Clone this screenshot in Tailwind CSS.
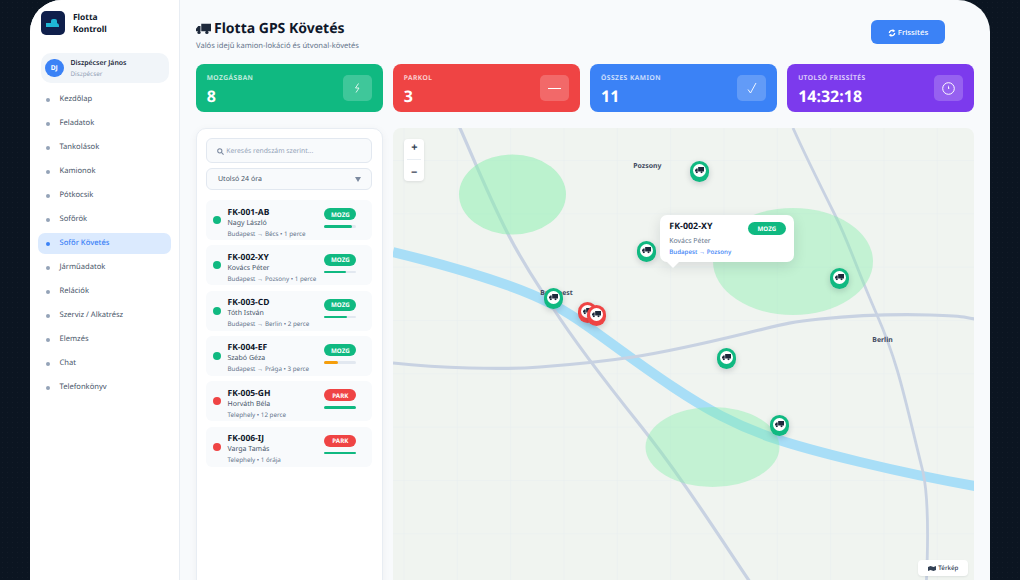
<!DOCTYPE html>
<html lang="hu">
<head>
    <meta charset="UTF-8">
    <meta name="viewport" content="width=device-width, initial-scale=1.0">
    <title>Flotta GPS Követés</title>
    <script src="https://cdn.jsdelivr.net/npm/@tailwindcss/browser@4"></script>
</head>
<body class="h-[580px] w-[1020px] overflow-hidden bg-[#0b1521] bg-[radial-gradient(rgba(255,255,255,0.03)_0.5px,transparent_0.6px)] bg-[size:5px_5px] font-['Noto_Sans',sans-serif] [text-rendering:geometricPrecision]">
    <svg class="hidden">
        <symbol id="truck" viewBox="0 0 20 14">
            <path fill="currentColor" d="M7 0h13v10H7zM6 3H3L0 6.5V10h6z"/>
            <circle fill="currentColor" cx="4" cy="11.5" r="2.2"/>
            <circle fill="currentColor" cx="14.5" cy="11.5" r="2.2"/>
        </symbol>
    </svg>

    <div class="mx-[30px] flex h-[580px] w-[960px] overflow-hidden rounded-t-[32px] bg-[#f8fafc]">
        <!-- sidebar -->
        <aside class="w-[150px] shrink-0 border-r border-[#e8edf3] bg-white px-[8px] pt-[11px]">
            <div class="flex items-center gap-[8px] pl-[3px]">
                <div class="relative h-[24px] w-[24px] overflow-hidden rounded-[5px] bg-[#0f1f4b]">
                    <div class="absolute left-[5px] top-[12px] h-[4px] w-[13px] rounded-tr-[3px] bg-[#1fb6d5]"></div>
                    <div class="absolute left-[10px] top-[8px] h-[5px] w-[6px] rounded-t-[2px] bg-[#1fb6d5]"></div>
                </div>
                <div class="pt-[1px] text-[8.4px] font-bold leading-[11.5px] text-[#0f172a]">Flotta<br>Kontroll</div>
            </div>
            <div class="mt-[18px] ml-[3px] flex h-[30px] w-[128px] items-center gap-[7px] rounded-[10px] bg-[#f1f5f9] pl-[4px]">
                <div class="flex h-[18.5px] w-[18.5px] items-center justify-center rounded-full bg-[#3b82f6] text-[6.7px] font-bold text-white">DJ</div>
                <div>
                    <div class="text-[6.9px] font-semibold leading-[10px] text-[#1e293b]">Diszpécser János</div>
                    <div class="text-[6.3px] leading-[9px] text-[#94a3b8]">Diszpécser</div>
                </div>
            </div>
            <nav class="mt-[4px] flex flex-col text-[7.6px] text-[#475569]">
                <a class="flex h-[24px] items-center gap-[9.5px] pl-[8px] pt-[2px]"><span class="h-[4px] w-[4px] rounded-full bg-[#94a3b8]"></span>Kezdőlap</a>
                <a class="flex h-[24px] items-center gap-[9.5px] pl-[8px] pt-[2px]"><span class="h-[4px] w-[4px] rounded-full bg-[#94a3b8]"></span>Feladatok</a>
                <a class="flex h-[24px] items-center gap-[9.5px] pl-[8px] pt-[2px]"><span class="h-[4px] w-[4px] rounded-full bg-[#94a3b8]"></span>Tankolások</a>
                <a class="flex h-[24px] items-center gap-[9.5px] pl-[8px] pt-[2px]"><span class="h-[4px] w-[4px] rounded-full bg-[#94a3b8]"></span>Kamionok</a>
                <a class="flex h-[24px] items-center gap-[9.5px] pl-[8px] pt-[2px]"><span class="h-[4px] w-[4px] rounded-full bg-[#94a3b8]"></span>Pótkocsik</a>
                <a class="flex h-[24px] items-center gap-[9.5px] pl-[8px] pt-[2px]"><span class="h-[4px] w-[4px] rounded-full bg-[#94a3b8]"></span>Sofőrök</a>
                <a class="my-[1.5px] flex h-[21px] items-center gap-[9.5px] rounded-[7px] bg-[#dbeafe] pl-[8px] pt-[2px] font-medium text-[#3b82f6]"><span class="h-[4px] w-[4px] rounded-full bg-[#3b82f6]"></span>Sofőr Követés</a>
                <a class="flex h-[24px] items-center gap-[9.5px] pl-[8px] pt-[2px]"><span class="h-[4px] w-[4px] rounded-full bg-[#94a3b8]"></span>Járműadatok</a>
                <a class="flex h-[24px] items-center gap-[9.5px] pl-[8px] pt-[2px]"><span class="h-[4px] w-[4px] rounded-full bg-[#94a3b8]"></span>Relációk</a>
                <a class="flex h-[24px] items-center gap-[9.5px] pl-[8px] pt-[2px]"><span class="h-[4px] w-[4px] rounded-full bg-[#94a3b8]"></span>Szerviz / Alkatrész</a>
                <a class="flex h-[24px] items-center gap-[9.5px] pl-[8px] pt-[2px]"><span class="h-[4px] w-[4px] rounded-full bg-[#94a3b8]"></span>Elemzés</a>
                <a class="flex h-[24px] items-center gap-[9.5px] pl-[8px] pt-[2px]"><span class="h-[4px] w-[4px] rounded-full bg-[#94a3b8]"></span>Chat</a>
                <a class="flex h-[24px] items-center gap-[9.5px] pl-[8px] pt-[2px]"><span class="h-[4px] w-[4px] rounded-full bg-[#94a3b8]"></span>Telefonkönyv</a>
            </nav>
        </aside>

        <!-- main -->
        <main class="w-[810px] pl-[16px] pr-[16px]">
            <header class="flex h-[64px] items-start justify-between">
                <div class="pt-[19px]">
                    <h1 class="flex items-center gap-[3px] text-[14px] font-bold leading-[20px] text-[#0f172a]">
                        <svg class="h-[12px] w-[15px] text-[#1e293b]"><use href="#truck"/></svg>
                        Flotta GPS Követés
                    </h1>
                    <p class="mt-[2px] text-[7.6px] leading-[11px] text-[#64748b]">Valós idejű kamion-lokáció és útvonal-követés</p>
                </div>
                <button class="mr-[29px] mt-[20px] flex h-[24px] w-[74px] items-center justify-center gap-[2px] rounded-[6px] bg-[#3b82f6] pt-[1px] text-[7.8px] font-medium text-white">
                    <svg class="h-[8px] w-[8px]" viewBox="0 0 12 12" fill="none" stroke="currentColor" stroke-width="2"><path d="M2 6a4 4 0 0 1 6.5-3M10 6a4 4 0 0 1-6.5 3"/><path fill="currentColor" stroke="none" d="M7 0l4 3-4 2zM5 12L1 9l4-2z"/></svg>
                    Frissítés
                </button>
            </header>

            <section class="grid h-[48px] grid-cols-4 gap-[10.67px]">
                <div class="flex items-center justify-between rounded-[8px] bg-[#10b981] px-[10.67px] text-white">
                    <div class="pt-[2px]">
                        <div class="text-[6.67px] font-semibold uppercase leading-[9px] tracking-[0.5px] text-white/80">Mozgásban</div>
                        <div class="mt-[4px] text-[16px] font-bold leading-[20px]">8</div>
                    </div>
                    <div class="flex h-[26px] w-[29px] items-center justify-center rounded-[5px] bg-white/20">
                        <svg class="h-[10px] w-[7px]" viewBox="0 0 7 10" fill="none" stroke="currentColor" stroke-width="0.8"><path d="M4.5 0.5L1.5 5h3.5L2 9.5"/></svg>
                    </div>
                </div>
                <div class="flex items-center justify-between rounded-[8px] bg-[#ef4444] px-[10.67px] text-white">
                    <div class="pt-[2px]">
                        <div class="text-[6.67px] font-semibold uppercase leading-[9px] tracking-[0.5px] text-white/80">Parkol</div>
                        <div class="mt-[4px] text-[16px] font-bold leading-[20px]">3</div>
                    </div>
                    <div class="flex h-[26px] w-[29px] items-center justify-center rounded-[5px] bg-white/20">
                        <span class="h-[1px] w-[13px] bg-white"></span>
                    </div>
                </div>
                <div class="flex items-center justify-between rounded-[8px] bg-[#3b82f6] px-[10.67px] text-white">
                    <div class="pt-[2px]">
                        <div class="text-[6.67px] font-semibold uppercase leading-[9px] tracking-[0.5px] text-white/80">Összes kamion</div>
                        <div class="mt-[4px] text-[16px] font-bold leading-[20px]">11</div>
                    </div>
                    <div class="flex h-[26px] w-[29px] items-center justify-center rounded-[5px] bg-white/20">
                        <svg class="h-[12px] w-[10px]" viewBox="0 0 10 12" fill="none" stroke="currentColor" stroke-width="0.9"><path d="M1 7.5L3.5 11L9 1"/></svg>
                    </div>
                </div>
                <div class="flex items-center justify-between rounded-[8px] bg-[#7c3aed] px-[10.67px] text-white">
                    <div class="pt-[2px]">
                        <div class="text-[6.67px] font-semibold uppercase leading-[9px] tracking-[0.5px] text-white/80">Utolsó frissítés</div>
                        <div class="mt-[4px] text-[16px] font-bold leading-[20px]">14:32:18</div>
                    </div>
                    <div class="flex h-[26px] w-[29px] items-center justify-center rounded-[5px] bg-white/20">
                        <svg class="h-[13px] w-[13px]" viewBox="0 0 13 13" fill="none" stroke="currentColor" stroke-width="1"><circle cx="6.5" cy="6.5" r="5.8"/><path fill="currentColor" stroke="none" d="M6 3l1.5 3.5L6 7z"/></svg>
                    </div>
                </div>
            </section>

            <section class="mt-[16px] flex h-[500px] gap-[10.67px]">
                <!-- truck list -->
                <div class="w-[186.67px] shrink-0 rounded-[10px] border border-[#e8edf3] bg-white px-[9.33px] pt-[9px] shadow-[0_2px_8px_rgba(15,23,42,0.05)]">
                    <div class="flex h-[25px] items-center gap-[2px] rounded-[6px] border border-[#e2e8f0] bg-[#f8fafc] pl-[10px] pt-[1.5px] text-[6.8px] text-[#94a3b8]">
                        <svg class="h-[7px] w-[7px]" viewBox="0 0 8 8" fill="none" stroke="#7c8aa0" stroke-width="1.2"><circle cx="3.2" cy="3.2" r="2.4"/><path d="M5 5l2.5 2.5"/></svg>
                        Keresés rendszám szerint...
                    </div>
                    <div class="mt-[5px] flex h-[22px] items-center justify-between rounded-[6px] border border-[#e2e8f0] bg-[#f8fafc] px-[10.67px] pt-[1.5px] text-[7px] text-[#475569]">
                        Utolsó 24 óra
                        <span class="h-0 w-0 border-x-[3px] border-t-[5px] border-x-transparent border-t-[#7c8aa0]"></span>
                    </div>
                    <ul class="mt-[10px] flex flex-col gap-[5.33px]">
                        <li class="flex h-[40px] items-center rounded-[6px] bg-[#f8fafc] pl-[6.67px] pr-[16px]">
                            <span class="h-[8px] w-[8px] rounded-full bg-[#10b981]"></span>
                            <div class="ml-[6.5px] pt-[5px]">
                                <div class="text-[8.5px] font-bold leading-[11px] text-[#0f172a]">FK-001-AB</div>
                                <div class="text-[7px] leading-[11px] text-[#475569]">Nagy László</div>
                                <div class="text-[6.25px] leading-[10px] text-[#64748b]">Budapest → Bécs • 1 perce</div>
                            </div>
                            <div class="ml-auto w-[32px] pb-[4px]">
                                <div class="flex h-[12px] items-center justify-center rounded-full bg-[#10b981] text-[6.2px] font-bold text-white">MOZG</div>
                                <div class="mt-[5px] h-[2.67px] rounded-full bg-[#e2e8f0]"><div class="h-full rounded-full bg-[#10b981]" style="width:85%"></div></div>
                            </div>
                        </li>
                        <li class="flex h-[40px] items-center rounded-[6px] bg-[#f8fafc] pl-[6.67px] pr-[16px]">
                            <span class="h-[8px] w-[8px] rounded-full bg-[#10b981]"></span>
                            <div class="ml-[6.5px] pt-[5px]">
                                <div class="text-[8.5px] font-bold leading-[11px] text-[#0f172a]">FK-002-XY</div>
                                <div class="text-[7px] leading-[11px] text-[#475569]">Kovács Péter</div>
                                <div class="text-[6.25px] leading-[10px] text-[#64748b]">Budapest → Pozsony • 1 perce</div>
                            </div>
                            <div class="ml-auto w-[32px] pb-[4px]">
                                <div class="flex h-[12px] items-center justify-center rounded-full bg-[#10b981] text-[6.2px] font-bold text-white">MOZG</div>
                                <div class="mt-[5px] h-[2.67px] rounded-full bg-[#e2e8f0]"><div class="h-full rounded-full bg-[#10b981]" style="width:67%"></div></div>
                            </div>
                        </li>
                        <li class="flex h-[40px] items-center rounded-[6px] bg-[#f8fafc] pl-[6.67px] pr-[16px]">
                            <span class="h-[8px] w-[8px] rounded-full bg-[#10b981]"></span>
                            <div class="ml-[6.5px] pt-[5px]">
                                <div class="text-[8.5px] font-bold leading-[11px] text-[#0f172a]">FK-003-CD</div>
                                <div class="text-[7px] leading-[11px] text-[#475569]">Tóth István</div>
                                <div class="text-[6.25px] leading-[10px] text-[#64748b]">Budapest → Berlin • 2 perce</div>
                            </div>
                            <div class="ml-auto w-[32px] pb-[4px]">
                                <div class="flex h-[12px] items-center justify-center rounded-full bg-[#10b981] text-[6.2px] font-bold text-white">MOZG</div>
                                <div class="mt-[5px] h-[2.67px] rounded-full bg-[#e2e8f0]"><div class="h-full rounded-full bg-[#10b981]" style="width:72%"></div></div>
                            </div>
                        </li>
                        <li class="flex h-[40px] items-center rounded-[6px] bg-[#f8fafc] pl-[6.67px] pr-[16px]">
                            <span class="h-[8px] w-[8px] rounded-full bg-[#10b981]"></span>
                            <div class="ml-[6.5px] pt-[5px]">
                                <div class="text-[8.5px] font-bold leading-[11px] text-[#0f172a]">FK-004-EF</div>
                                <div class="text-[7px] leading-[11px] text-[#475569]">Szabó Géza</div>
                                <div class="text-[6.25px] leading-[10px] text-[#64748b]">Budapest → Prága • 3 perce</div>
                            </div>
                            <div class="ml-auto w-[32px] pb-[4px]">
                                <div class="flex h-[12px] items-center justify-center rounded-full bg-[#10b981] text-[6.2px] font-bold text-white">MOZG</div>
                                <div class="mt-[5px] h-[2.67px] rounded-full bg-[#e2e8f0]"><div class="h-full rounded-full bg-[#f59e0b]" style="width:42%"></div></div>
                            </div>
                        </li>
                        <li class="flex h-[40px] items-center rounded-[6px] bg-[#f8fafc] pl-[6.67px] pr-[16px]">
                            <span class="h-[8px] w-[8px] rounded-full bg-[#ef4444]"></span>
                            <div class="ml-[6.5px] pt-[5px]">
                                <div class="text-[8.5px] font-bold leading-[11px] text-[#0f172a]">FK-005-GH</div>
                                <div class="text-[7px] leading-[11px] text-[#475569]">Horváth Béla</div>
                                <div class="text-[6.25px] leading-[10px] text-[#64748b]">Telephely • 12 perce</div>
                            </div>
                            <div class="ml-auto w-[32px] pb-[4px]">
                                <div class="flex h-[12px] items-center justify-center rounded-full bg-[#ef4444] text-[6.2px] font-bold text-white">PARK</div>
                                <div class="mt-[5px] h-[2.67px] rounded-full bg-[#10b981]"></div>
                            </div>
                        </li>
                        <li class="flex h-[40px] items-center rounded-[6px] bg-[#f8fafc] pl-[6.67px] pr-[16px]">
                            <span class="h-[8px] w-[8px] rounded-full bg-[#ef4444]"></span>
                            <div class="ml-[6.5px] pt-[5px]">
                                <div class="text-[8.5px] font-bold leading-[11px] text-[#0f172a]">FK-006-IJ</div>
                                <div class="text-[7px] leading-[11px] text-[#475569]">Varga Tamás</div>
                                <div class="text-[6.25px] leading-[10px] text-[#64748b]">Telephely • 1 órája</div>
                            </div>
                            <div class="ml-auto w-[32px] pb-[4px]">
                                <div class="flex h-[12px] items-center justify-center rounded-full bg-[#ef4444] text-[6.2px] font-bold text-white">PARK</div>
                                <div class="mt-[5px] h-[2.67px] rounded-full bg-[#10b981]"></div>
                            </div>
                        </li>
                    </ul>
                </div>

                <!-- map -->
                <div class="relative flex-1 overflow-hidden rounded-[8px] bg-[#f0f4f0]">
                    <svg class="absolute inset-0" width="582" height="500" viewBox="393 128 582 500">
                        <defs>
                            <pattern id="grid" x="403.5" y="160" width="53.33" height="53.33" patternUnits="userSpaceOnUse">
                                <path d="M0 0V53.33M0 0H53.33" fill="none" stroke="#e8eef0" stroke-width="1"/>
                            </pattern>
                        </defs>
                        <rect x="393" y="128" width="582" height="500" fill="url(#grid)"/>
                        <path d="M393 252C430 261 470 272 507 285S565 310 590 328S640 365 673 387S735 425 773 438S900 473 975 486" fill="none" stroke="#a8def7" stroke-width="10"/>
                        <path d="M459 126C470 150 488 195 507 232S535 280 553 308S600 375 640 425S715 530 752 585" fill="none" stroke="#c8d2e2" stroke-width="3.2"/>
                        <path d="M793 128C805 155 820 185 835 215S855 265 877 315S905 400 923 472C928 495 929 530 926 590" fill="none" stroke="#c8d2e2" stroke-width="2.8"/>
                        <path d="M393 363C440 368 500 370 540 367S600 362 633 357S710 342 747 333S790 322 820 319S890 314 930 315S960 317 975 319" fill="none" stroke="#c8d2e2" stroke-width="3.2"/>
                        <ellipse cx="512.5" cy="194.5" rx="53.5" ry="40" fill="#86efac" opacity="0.5"/>
                        <ellipse cx="793" cy="261.5" rx="80" ry="53.5" fill="#86efac" opacity="0.42"/>
                        <ellipse cx="712.5" cy="447" rx="67" ry="40" fill="#86efac" opacity="0.42"/>
                    </svg>

                    <!-- zoom control -->
                    <div class="absolute left-[11px] top-[11px] flex h-[42px] w-[20px] flex-col items-center justify-around rounded-[4px] bg-white text-[11px] font-bold leading-none text-[#334155] shadow-[0_1px_3px_rgba(15,23,42,0.1)]">
                        <span>+</span><span class="h-px w-[14px] bg-[#e9eef3]"></span><span>−</span>
                    </div>

                    <!-- city labels -->
                    <span class="absolute left-[240px] top-[33.5px] text-[6.9px] font-bold text-[#3f4a5f]">Pozsony</span>
                    <span class="absolute left-[147px] top-[160.5px] text-[6.9px] font-bold text-[#3f4a5f]">Budapest</span>
                    <span class="absolute left-[479px] top-[207.5px] text-[6.9px] font-bold text-[#3f4a5f]">Berlin</span>

                    <!-- markers -->
                    <div class="absolute left-[296.5px] top-[33px] flex h-[21px] w-[19px] justify-center rounded-full bg-[#10b981] pt-[2.5px] shadow-[0_2px_6px_rgba(15,23,42,0.18)]"><span class="flex h-[13.5px] w-[13.5px] items-center justify-center rounded-full bg-white"><svg class="h-[6.5px] w-[9px] text-[#1e293b]"><use href="#truck"/></svg></span></div>
                    <div class="absolute left-[243.5px] top-[113px] flex h-[21px] w-[19px] justify-center rounded-full bg-[#10b981] pt-[2.5px] shadow-[0_2px_6px_rgba(15,23,42,0.18)]"><span class="flex h-[13.5px] w-[13.5px] items-center justify-center rounded-full bg-white"><svg class="h-[6.5px] w-[9px] text-[#1e293b]"><use href="#truck"/></svg></span></div>
                    <div class="absolute left-[150.5px] top-[160px] flex h-[21px] w-[19px] justify-center rounded-full bg-[#10b981] pt-[2.5px] shadow-[0_2px_6px_rgba(15,23,42,0.18)]"><span class="flex h-[13.5px] w-[13.5px] items-center justify-center rounded-full bg-white"><svg class="h-[6.5px] w-[9px] text-[#1e293b]"><use href="#truck"/></svg></span></div>
                    <div class="absolute left-[184.5px] top-[174px] flex h-[21px] w-[19px] justify-center rounded-full bg-[#ef4444] pt-[2.5px] shadow-[0_2px_6px_rgba(15,23,42,0.18)]"><span class="flex h-[13.5px] w-[13.5px] items-center justify-center rounded-full bg-white"><svg class="h-[6.5px] w-[9px] text-[#1e293b]"><use href="#truck"/></svg></span></div>
                    <div class="absolute left-[193.5px] top-[177px] flex h-[21px] w-[19px] justify-center rounded-full bg-[#ef4444] pt-[2.5px] shadow-[0_2px_6px_rgba(15,23,42,0.18)]"><span class="flex h-[13.5px] w-[13.5px] items-center justify-center rounded-full bg-white"><svg class="h-[6.5px] w-[9px] text-[#1e293b]"><use href="#truck"/></svg></span></div>
                    <div class="absolute left-[323.5px] top-[220px] flex h-[21px] w-[19px] justify-center rounded-full bg-[#10b981] pt-[2.5px] shadow-[0_2px_6px_rgba(15,23,42,0.18)]"><span class="flex h-[13.5px] w-[13.5px] items-center justify-center rounded-full bg-white"><svg class="h-[6.5px] w-[9px] text-[#1e293b]"><use href="#truck"/></svg></span></div>
                    <div class="absolute left-[376.5px] top-[287px] flex h-[21px] w-[19px] justify-center rounded-full bg-[#10b981] pt-[2.5px] shadow-[0_2px_6px_rgba(15,23,42,0.18)]"><span class="flex h-[13.5px] w-[13.5px] items-center justify-center rounded-full bg-white"><svg class="h-[6.5px] w-[9px] text-[#1e293b]"><use href="#truck"/></svg></span></div>
                    <div class="absolute left-[436.5px] top-[140px] flex h-[21px] w-[19px] justify-center rounded-full bg-[#10b981] pt-[2.5px] shadow-[0_2px_6px_rgba(15,23,42,0.18)]"><span class="flex h-[13.5px] w-[13.5px] items-center justify-center rounded-full bg-white"><svg class="h-[6.5px] w-[9px] text-[#1e293b]"><use href="#truck"/></svg></span></div>

                    <!-- popup -->
                    <div class="absolute left-[266.5px] top-[87px] h-[47px] w-[134px] rounded-[7px] bg-white pl-[9.5px] pr-[8px] pt-[5px] shadow-[0_4px_14px_rgba(15,23,42,0.12)]">
                        <div class="flex items-start justify-between">
                            <span class="text-[8.9px] font-bold leading-[12px] text-[#0f172a]">FK-002-XY</span>
                            <span class="mt-[2px] flex h-[12.5px] w-[38px] items-center justify-center rounded-full bg-[#10b981] text-[6.2px] font-bold text-white">MOZG</span>
                        </div>
                        <div class="mt-[1.5px] text-[6.9px] leading-[11px] text-[#64748b]">Kovács Péter</div>
                        <div class="text-[6.2px] font-medium leading-[10px] text-[#3b82f6]">Budapest → Pozsony</div>
                        <span class="absolute left-[7px] top-[47px] h-0 w-0 border-x-[6px] border-t-[6px] border-x-transparent border-t-white"></span>
                    </div>

                    <!-- layer label -->
                    <div class="absolute left-[525px] top-[432px] flex h-[16px] w-[50px] items-center justify-center gap-[2px] rounded-[4px] bg-white text-[6.2px] font-medium text-[#334155] shadow-[0_1px_2px_rgba(15,23,42,0.08)]">
                        <svg class="h-[5px] w-[8px]" viewBox="0 0 8 5" fill="#334155"><path d="M0 1l2.5-1 3 1L8 0v4L5.5 5l-3-1L0 5z"/></svg>
                        Térkép
                    </div>
                </div>
            </section>
        </main>
    </div>
</body>
</html>
